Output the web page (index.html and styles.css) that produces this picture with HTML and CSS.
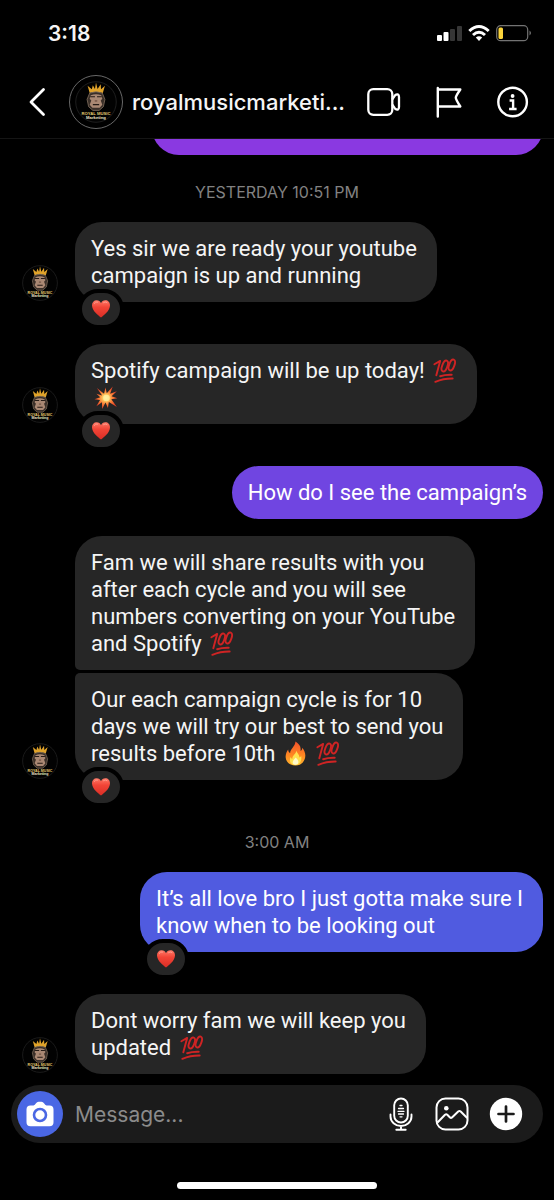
FILE: index.html
```html
<!DOCTYPE html>
<html lang="en">
<head>
<meta charset="utf-8">
<meta name="viewport" content="width=device-width, initial-scale=1">
<title>royalmusicmarketing</title>
<link rel="stylesheet" href="styles.css">
</head>
<body>
<svg class="defs" aria-hidden="true">
  <defs>
    <linearGradient id="heart-fill" x1="0" y1="0" x2="0" y2="1"><stop offset="0" stop-color="#ff7a68"/><stop offset=".4" stop-color="#f24537"/><stop offset="1" stop-color="#d92d25"/></linearGradient>
    <linearGradient id="flame-fill" x1="0" y1="0" x2="0" y2="1"><stop offset="0" stop-color="#f4502a"/><stop offset=".6" stop-color="#ff8b22"/><stop offset="1" stop-color="#ffb52e"/></linearGradient>
    <radialGradient id="burst-fill"><stop offset="0" stop-color="#fff6c0"/><stop offset=".3" stop-color="#ffc65c"/><stop offset=".6" stop-color="#fa7b35"/><stop offset="1" stop-color="#e43f25"/></radialGradient>
    <symbol id="heart" viewBox="0 0 18 18"><path fill="url(#heart-fill)" d="M9 17.6C6.6 15.4 0 11 0 5.2 0 2.2 2 .2 4.6.2 6.7.2 8.300 1.400 9 3.200 9.700 1.400 11.300.2 13.400.2 16 .2 18 2.200 18 5.200 18 11 11.400 15.400 9 17.600Z"/><path d="M2.200 3.400Q3.400 1.300 5.600 2M11.500 2.600Q13.300 1.200 15 2.500" fill="none" stroke="#ffb0a2" stroke-width="1" stroke-linecap="round" opacity=".7"/></symbol>
    <symbol id="hundred" viewBox="0 0 26 26"><g fill="none" stroke="#cf2424" stroke-linecap="round"><path stroke-width="2" d="M4.500 18 8.500 3M2.500 6.500 8.500 3"/><ellipse cx="13.300" cy="8.300" rx="2.700" ry="6" stroke-width="2" transform="rotate(20 13.300 8.300)"/><ellipse cx="20.600" cy="7.300" rx="2.700" ry="6" stroke-width="2" transform="rotate(20 20.600 7.300)"/><path stroke-width="2" d="M8.500 19Q13.500 17.300 20.500 17.500M3.500 24.800Q12 21.200 21.500 21.300"/></g></symbol>
    <symbol id="burst" viewBox="0 0 26 26"><path fill="url(#burst-fill)" d="m4 3 7.500 6.200L13 2.500l1.300 6.200L20.500 1.500 17.800 9l7-2.500-5.500 5.300 6 2-6.200 1 5.700 8.200-8.300-5.200-1 6-2.500-5.500L9.500 25l-.2-7L3.500 22l3.800-6.500-5.800-.8 6-2L3.500 9l6 1.800Z"/><circle cx="14" cy="13.500" r="3.400" fill="#fff1a0" opacity=".8"/></symbol>
    <symbol id="flame" viewBox="0 0 26 28"><path fill="url(#flame-fill)" d="M13 .5c4.500 3 6.500 6 5.500 10.500 1.600-.5 2-2 2-3.500 3.500 4 4.500 9 2.500 13.500C21 25.500 17.500 27.500 13 27.500 7 27.500 2.500 24 2 18.500 1.700 15 3 12 4.800 9.500c.2 2 .7 3.500 2.200 4C7 8.500 12.500 6.500 13 .5Z"/><path fill="#ffe04f" d="M14 10.500c.5 3.500 4 4.500 3.200 8 1-.2 1.800-1 2-2 1.300 4-.7 10.500-6.200 10.500-5.300 0-7.500-4.500-5.600-9 .5 1.300 1.200 2 2.200 2C9 16 13.700 14.500 14 10.500Z"/><path fill="#fff9c8" d="M13.300 18.500c2.500 2.500 4 4.500 2.200 7.200-1.500 1.300-4 1.200-5.200-.2-1.400-2.200.8-4.500 3-7Z"/></symbol>
    <symbol id="logo" viewBox="0 0 40 40">
      <circle cx="20" cy="20" r="19.300" fill="#020202" stroke="#242424" stroke-width=".8"/>
      <path d="M14 11.500 12 4.500l4 3.300L17 4l2 3.500L20 1.500l1.500 6L24.500 3l.3 4.800L28.500 4.500l-2 7Q20 9.500 14 11.500Z" fill="#e0a32a"/>
      <path d="M14 11.500Q20 9 26 11.500l2.500 6-1.500 7-4 3.500h-6L13 24.500l-1.500-7Z" fill="#3a2f28" stroke="#8a7765" stroke-width=".7"/>
      <path d="M15 13.500q5-2 10 0l1 3.500-1.500 1.500 1.500 4-2.500 3h-7l-2.500-3 1.500-4L14 17Z" fill="#aa8873"/>
      <path d="M14.500 15h4.500M21 15h4.500M17 22.500h6" stroke="#241a15" stroke-width="1.100"/>
      <path d="M18.800 19h2.400" stroke="#604336" stroke-width="1"/>
      <text x="20" y="32.300" text-anchor="middle" class="logo-name">ROYAL MUSIC</text>
      <text x="20" y="36" text-anchor="middle" class="logo-sub">Marketing</text>
    </symbol>
  </defs>
</svg>

<div class="screen">
  <div class="status">
    <span class="clock">3:18</span>
    <svg width="95" height="18" viewBox="0 0 95 18" role="img" aria-label="Signal, Wi-Fi and battery">
      <rect x="0" y="11" width="5" height="6" rx="1" fill="#fff"/><rect x="6.500" y="8" width="5" height="9" rx="1" fill="#fff"/><rect x="13" y="5" width="5" height="12" rx="1" fill="#363636"/><rect x="20" y="2" width="5" height="15" rx="1" fill="#363636"/>
      <g fill="none" stroke="#fff" stroke-width="3"><path d="M32.300 7Q42 -2 51.700 7"/><path d="M36 11Q42 5.500 48 11"/></g><path d="M38.800 13.600q3.200-2.600 6.400 0L42 17Z" fill="#fff"/>
      <rect x="59.700" y="1.700" width="31" height="15" rx="4" fill="none" stroke="#737373" stroke-width="1.200"/><rect x="61.500" y="3.500" width="4.500" height="11.500" rx="1.500" fill="#fbd43b"/><path d="M92.500 6.500q3 2.500 0 5Z" fill="#737373"/>
    </svg>
  </div>

  <header class="header">
    <button class="icon-btn back" aria-label="Back"><svg width="18" height="30" viewBox="0 0 18 30"><path d="M15.500 2.500 3 15l12.500 12.500" fill="none" stroke="#fff" stroke-width="2.800" stroke-linecap="round" stroke-linejoin="round"/></svg></button>
    <span class="avatar-ring"><svg width="42" height="42"><use href="#logo"/></svg></span>
    <h1 class="name">royalmusicmarketi...</h1>
    <nav class="actions">
      <button class="icon-btn" aria-label="Video call"><svg width="34" height="30" viewBox="0 0 34 30" fill="none" stroke="#fff" stroke-width="2.300"><rect x="1.300" y="2.200" width="24" height="25.600" rx="5"/><path d="M25.300 12.500 28 8.300Q29.500 7 30.900 7.400 32 8 32 10v10q0 2-1.100 2.600-1.200.4-2.900-.9l-2.700-4.200" stroke-linejoin="round"/></svg></button>
      <button class="icon-btn" aria-label="Flag"><svg width="28" height="32" viewBox="0 0 28 32" fill="none" stroke="#fff" stroke-width="2.400" stroke-linecap="round" stroke-linejoin="round"><path d="M2.800 2v28.500M2.800 3.500h22.500q-4.500 6.500-4.500 8.200t4.500 8.800H2.800"/></svg></button>
      <button class="icon-btn" aria-label="Information"><svg width="32" height="32" viewBox="0 0 32 32" fill="none" stroke="#fff" stroke-width="2.400"><circle cx="15.600" cy="16" r="14.300"/><circle cx="15.600" cy="10" r="1.900" fill="#fff" stroke="none"/><path d="M12.600 14.500h3.500v8M12.100 23h7.500"/></svg></button>
    </nav>
  </header>

  <main class="chat">
    <div class="clipped"><div class="bubble earlier"></div></div>
    <time class="stamp">YESTERDAY 10:51 PM</time>

    <div class="row reacted">
      <svg class="avatar" role="img" aria-label="Royal Music Marketing"><use href="#logo"/></svg>
      <div class="bubble">Yes sir we are ready your youtube<br>campaign is up and running<span class="reaction"><svg role="img" aria-label="❤️"><use href="#heart"/></svg></span></div>
    </div>
    <div class="row reacted">
      <svg class="avatar" role="img" aria-label="Royal Music Marketing"><use href="#logo"/></svg>
      <div class="bubble">Spotify campaign will be up today! <svg class="emoji" role="img" aria-label="💯"><use href="#hundred"/></svg><br><svg class="emoji" role="img" aria-label="💥"><use href="#burst"/></svg><span class="reaction"><svg role="img" aria-label="❤️"><use href="#heart"/></svg></span></div>
    </div>
    <div class="row mine">
      <div class="bubble violet">How do I see the campaign’s</div>
    </div>
    <div class="row joined">
      <span class="avatar"></span>
      <div class="bubble first">Fam we will share results with you<br>after each cycle and you will see<br>numbers converting on your YouTube<br>and Spotify <svg class="emoji" role="img" aria-label="💯"><use href="#hundred"/></svg></div>
    </div>
    <div class="row">
      <svg class="avatar" role="img" aria-label="Royal Music Marketing"><use href="#logo"/></svg>
      <div class="bubble last">Our each campaign cycle is for 10<br>days we will try our best to send you<br>results before 10th <svg class="emoji" role="img" aria-label="🔥"><use href="#flame"/></svg> <svg class="emoji" role="img" aria-label="💯"><use href="#hundred"/></svg><span class="reaction"><svg role="img" aria-label="❤️"><use href="#heart"/></svg></span></div>
    </div>
    <time class="stamp later">3:00 AM</time>
    <div class="row mine reacted">
      <div class="bubble blue">It’s all love bro I just gotta make sure I<br>know when to be looking out<span class="reaction"><svg role="img" aria-label="❤️"><use href="#heart"/></svg></span></div>
    </div>
    <div class="row final">
      <svg class="avatar" role="img" aria-label="Royal Music Marketing"><use href="#logo"/></svg>
      <div class="bubble">Dont worry fam we will keep you<br>updated <svg class="emoji" role="img" aria-label="💯"><use href="#hundred"/></svg></div>
    </div>
  </main>

  <form class="composer">
    <button type="button" class="camera" aria-label="Camera"><svg width="28" height="26" viewBox="0 0 28 26"><path fill="#fff" d="M4.500 4.500h3Q9 4 9.800 2.500 11 .8 12.500.8h3q1.500 0 2.700 1.700.8 1.500 2.300 2h3q4 0 4 4v12.700q0 4-4 4h-19q-4 0-4-4V8.500q0-4 4-4Z"/><circle cx="14" cy="14" r="6" fill="none" stroke="#4a67e4" stroke-width="2.600"/></svg></button>
    <input class="message" type="text" placeholder="Message..." aria-label="Message">
    <button type="button" class="icon-btn" aria-label="Voice message"><svg width="28" height="34" viewBox="-2 0 28 34" fill="none" stroke="#fff" stroke-width="1.900" stroke-linecap="round"><rect x="5.200" y="1.500" width="13.600" height="24" rx="6.800"/><path d="M1.500 17.500v2a10.500 9.500 0 0 0 21 0v-2M12 29v3.500M7.300 32.700h9.400"/><path stroke-width="1.300" d="M11 8.500h2M9.500 11.500h5M9 14.300h6M9.500 17h5M11 19.800h2"/></svg></button>
    <button type="button" class="icon-btn" aria-label="Photo"><svg width="34" height="34" viewBox="0 0 34 34" fill="none" stroke="#fff" stroke-width="2" stroke-linejoin="round"><rect x="1.500" y="1.500" width="31" height="31" rx="9"/><circle cx="11.300" cy="11.300" r="2.300" fill="#fff" stroke="none"/><path d="M2.500 25.500 10 17.800q1.200-1 2.300 0l2.700 2.700q1 .8 2 0l6.200-6q1.300-1 2.500 0l6.500 6.500"/></svg></button>
    <button type="button" class="icon-btn" aria-label="More"><svg width="34" height="34" viewBox="0 0 34 34"><circle cx="17" cy="17" r="16.200" fill="#fff"/><path d="M17 9.500v15M9.500 17h15" stroke="#1b1b1b" stroke-width="2.700" stroke-linecap="round"/></svg></button>
  </form>
  <div class="home-bar"></div>
</div>
</body>
</html>
```

FILE: styles.css
```css
* { box-sizing: border-box; }
body {
  margin: 0;
  background: #000;
  color: #f5f5f5;
  font-family: Inter, "Liberation Sans", sans-serif;
}
.defs { position: absolute; width: 0; height: 0; }
.logo-name { font: 700 4px "Liberation Sans", sans-serif; fill: #e2cb70; }
.logo-sub { font: 700 4px "Liberation Sans", sans-serif; fill: #f0e9c8; }
.screen { display: flex; flex-direction: column; min-height: 100vh; }

.status {
  display: flex;
  align-items: center;
  justify-content: space-between;
  height: 66px;
  padding: 0 22px 0 48px;
}
.clock { font-size: 21px; font-weight: 600; }

.header {
  display: flex;
  align-items: center;
  height: 73px;
  padding: 0 25px 0 28px;
  border-bottom: 1px solid #151515;
}
.icon-btn, .camera {
  display: flex;
  align-items: center;
  justify-content: center;
  flex: none;
  padding: 0;
  border: 0;
  background: none;
}
.avatar-ring {
  display: flex;
  align-items: center;
  justify-content: center;
  flex: none;
  width: 54px;
  height: 54px;
  margin: 0 9px 0 23px;
  border: 1px solid #686868;
  border-radius: 50%;
}
.name { flex: 1; margin: 0; font-size: 22px; font-weight: 500; white-space: nowrap; }
.actions { display: flex; align-items: center; gap: 34px; }

.chat { padding: 0 11px 0 22px; }
.clipped { height: 16px; overflow: hidden; }
.bubble {
  position: relative;
  padding: 13px 20px 13px 16px;
  border-radius: 27px;
  background: #262626;
  font-family: Roboto, "Liberation Sans", sans-serif;
  font-size: 22px;
  line-height: 27px;
  white-space: nowrap;
}
.earlier { width: 75%; height: 54px; margin: -38px 0 0 auto; background: #8a39e1; }
.stamp {
  display: block;
  margin: 27px 11px 20px 0;
  color: #828282;
  font-size: 16px;
  line-height: 20px;
  text-align: center;
}
.later { margin-top: 52px; }
.row { display: flex; align-items: flex-end; gap: 17px; }
.reacted { margin-bottom: 42px; }
.mine { justify-content: flex-end; }
.violet { margin-bottom: 17px; padding-right: 16px; background: #7045e1; color: #fff; }
.blue { background: #505be0; color: #fff; }
.joined { margin-bottom: 3px; }
.first { border-bottom-left-radius: 5px; }
.last { border-top-left-radius: 5px; }
.avatar { flex: none; width: 36px; height: 38px; }
.emoji { width: 25px; height: 25px; margin: 0 0 0 2px; vertical-align: -5px; }
.reaction {
  position: absolute;
  left: 3px;
  bottom: -27px;
  display: flex;
  align-items: center;
  justify-content: center;
  width: 46px;
  height: 40px;
  border: 4px solid #000;
  border-radius: 20px;
  background: #262626;
}
.reaction svg { width: 18px; height: 18px; }

.composer {
  display: flex;
  align-items: center;
  gap: 20px;
  height: 58px;
  margin: 11px 11px 0;
  padding: 0 20px 0 6px;
  border-radius: 29px;
  background: #1b1b1b;
}
.camera { width: 46px; height: 46px; border-radius: 50%; background: #4a67e4; }
.message {
  flex: 1;
  min-width: 0;
  margin-left: -8px;
  padding: 0;
  border: 0;
  outline: 0;
  background: none;
  color: #f5f5f5;
  font: 21px Inter, "Liberation Sans", sans-serif;
}
.message::placeholder { color: #8b8b8b; opacity: 1; }
.home-bar {
  width: 36%;
  height: 7px;
  margin: auto auto 11px;
  border-radius: 4px;
  background: #fff;
}
```
